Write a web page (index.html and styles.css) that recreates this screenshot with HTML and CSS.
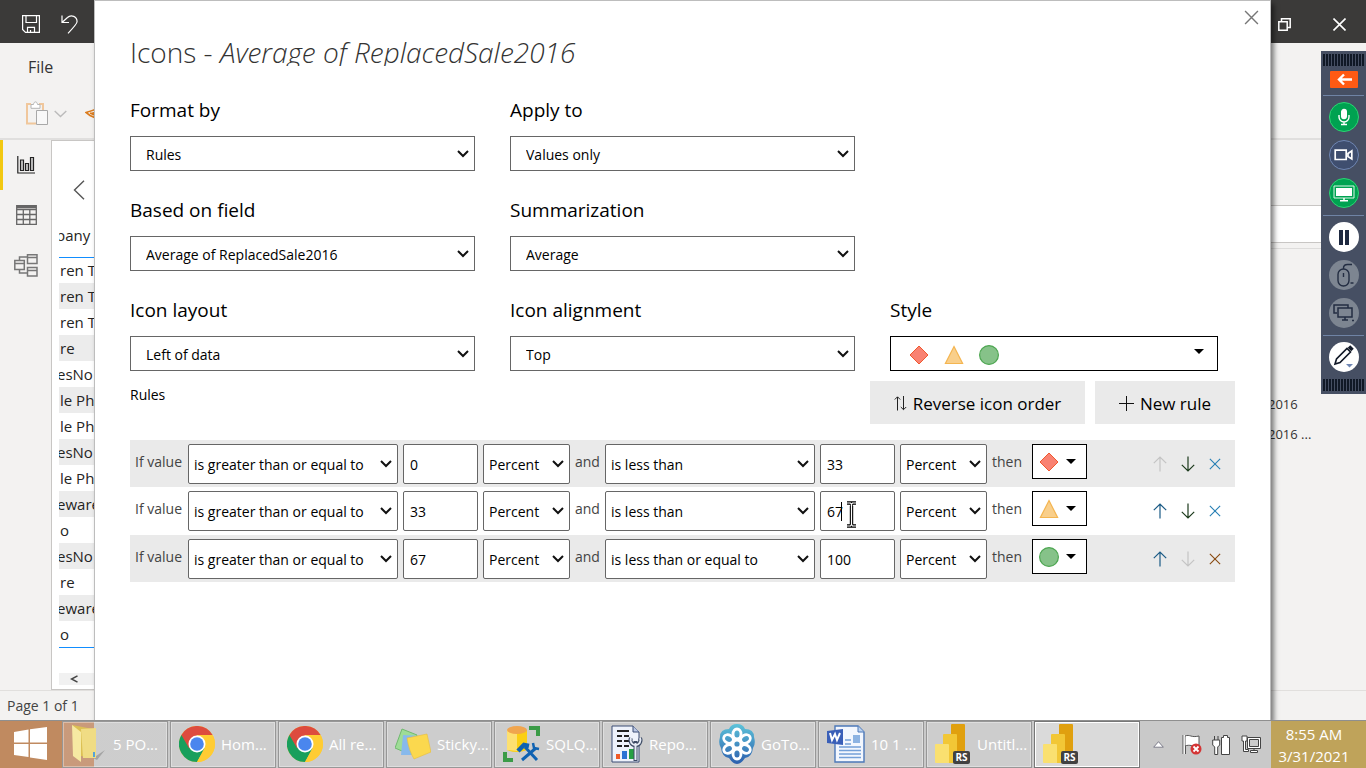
FILE: index.html
```html
<!DOCTYPE html>
<html lang="en">
<head>
<meta charset="utf-8">
<title>Icons - Average of ReplacedSale2016</title>
<link rel="stylesheet" href="styles.css">
</head>
<body>
<svg class="sprite" aria-hidden="true">
  <symbol id="diamond" viewBox="0 0 20 20"><path d="M10 1l9 9-9 9-9-9z" fill="#f98272" stroke="#f0582f"/></symbol>
  <symbol id="triangle" viewBox="0 0 20 20"><path d="M10 1.500l8.600 17H1.400z" fill="#f9cf8b" stroke="#f4b550" stroke-width="1.200"/></symbol>
  <symbol id="circle" viewBox="0 0 20 20"><circle cx="10" cy="10" r="9.400" fill="#86c289" stroke="#4da651" stroke-width="1.200"/></symbol>
  <symbol id="caret" viewBox="0 0 10 5"><path d="M0 0h10L5 5z" fill="#000"/></symbol>
  <symbol id="up" viewBox="0 0 14 16"><path d="M7 15.500V1M.8 7.200L7 1l6.200 6.200" fill="none" stroke="currentColor" stroke-width="1.200"/></symbol>
  <symbol id="down" viewBox="0 0 14 16"><path d="M7 .5V15M.8 8.800L7 15l6.200-6.200" fill="none" stroke="currentColor" stroke-width="1.200"/></symbol>
  <symbol id="cross" viewBox="0 0 14 14"><path d="M1 1l12 12M13 1L1 13" fill="none" stroke="currentColor" stroke-width="1.300"/></symbol>
  <symbol id="chrome" viewBox="0 0 36 36">
    <circle cx="18" cy="18" r="18" fill="#fc3"/>
    <path d="M18 18L2.400 9A18 18 0 0 0 18 36l7.800-13.500z" fill="#189f5c"/>
    <path d="M2.400 9A18 18 0 0 1 33.600 9H18l-7.800 13.500z" fill="#dd4b3e"/>
    <path d="M18 9.500h15.800A18 18 0 0 1 18 36l7.500-14z" fill="#fc3"/>
    <circle cx="18" cy="18" r="8.500" fill="#fff"/><circle cx="18" cy="18" r="6.800" fill="#4a86ee"/>
  </symbol>
  <symbol id="powerbi" viewBox="0 0 36 40">
    <rect x="16" width="14" height="39" rx="1" fill="#e0a00f"/>
    <path d="M8 11q0-1 1-1h12q1 0 1 1v28H8z" fill="#f2c736"/>
    <path d="M0 21q0-1 1-1h12q1 0 1 1v18H1q-1 0-1-1z" fill="#fae070"/>
    <rect x="18" y="27" width="17" height="13" rx="2" fill="#414141"/>
    <text x="26.500" y="37" text-anchor="middle" font-family="Open Sans, sans-serif" font-size="10" font-weight="700" fill="#fff">RS</text>
  </symbol>
</svg>

<div class="desktop">
  <div class="app">
    <header class="titlebar">
      <button class="plain" aria-label="Save"><svg width="18" height="18" viewBox="0 0 18 18" fill="none" stroke="#fff" stroke-width="1.200"><path d="M.6.6h16.800v16.800H3.500L.6 14.500zM4 .6v6.900h10.500V.6M5.500 17.400v-5h7v5M8.500 15v2.400"/></svg></button>
      <button class="plain" aria-label="Undo"><svg width="18" height="19" viewBox="0 0 18 19" fill="none" stroke="#fff" stroke-width="1.200"><path d="M1 .5v7h7M1 7.500l5.500-5C10-1 16.500 1.500 16 7c-.2 2-1.500 3.500-9 11.300"/></svg></button>
      <span class="spring"></span>
      <button class="plain restore" aria-label="Restore"><svg width="13" height="13" viewBox="0 0 13 13" fill="none" stroke="#fff" stroke-width="1.500"><path d="M.8 3.800h8.400v8.400H.8zM3.500 3.500V.8h8.700v8.700H9.500"/></svg></button>
      <button class="plain" aria-label="Close window"><svg width="13" height="13" viewBox="0 0 13 13" fill="none" stroke="#fff" stroke-width="1.600"><path d="M.5.5l12 12M12.500.5l-12 12"/></svg></button>
    </header>
    <div class="ribbon">
      <a class="file" href="#file">File</a>
      <div class="tools">
        <svg width="22" height="25" viewBox="0 0 22 25" fill="none"><path d="M5 3H1v19.500h9M13 3h4v6" stroke="#f0c79c" stroke-width="2"/><path d="M5 3.500h2.500C8 0 11 0 11.500 3.500H14v3.800H5z" stroke="#b5b5b5" fill="#fff"/><path d="M10.500 9.500h11v14h-11z" stroke="#a8a8a8" fill="#f8f8f8"/></svg>
        <svg width="13" height="8" viewBox="0 0 13 8" fill="none" stroke="#bbb" stroke-width="1.400"><path d="M.7 1l5.800 5.500L12.300 1"/></svg>
        <svg class="brush" width="14" height="12" viewBox="0 0 14 12" fill="none" stroke="#db7b1c" stroke-width="1.600"><path d="M14 0Q7 3 1 4.500l4 3 9 4M6 5.500l8-2M5 5l9 4"/></svg>
      </div>
    </div>
    <div class="workspace">
      <nav class="rail">
        <button class="plain railbtn active" aria-label="Report"><svg width="18" height="18" viewBox="0 0 18 18" fill="#c8c8c8" stroke="#222" stroke-width="1.200"><path d="M.8 0v17H18" fill="none"/><path d="M3.500 4h3v10.500h-3zM8.500 7.500h3v7h-3zM13.500 1.500h3v13h-3z"/></svg></button>
        <button class="plain railbtn" aria-label="Data"><svg width="21" height="20" viewBox="0 0 21 20" fill="none" stroke="#666" stroke-width="1.300"><path d="M.7.7h19.600v18.600H.7zM.7 4.500h19.600M.7 9.500h19.600M.7 14.500h19.600M7.300 4v15M13.800 4v15"/><path d="M1 2h19" stroke-width="2.500"/></svg></button>
        <button class="plain railbtn" aria-label="Model"><svg width="24" height="23" viewBox="0 0 24 23" fill="none" stroke="#777" stroke-width="1.500"><path d="M.8 6.500h9.500v9H.8zM13.500.8H23v8.700h-9.500zM13.500 13.500H23V22h-9.500zM.8 9.500h9.500M13.500 3.500H23M13.500 16.500H23M5.500 6V3h8M5.500 16v3h8"/></svg></button>
      </nav>
      <main class="canvas">
        <button class="plain back" aria-label="Back"><svg width="12" height="20" viewBox="0 0 12 20" fill="none" stroke="#555" stroke-width="1.400"><path d="M11 .8L1.500 10l9.500 9.200"/></svg></button>
        <table class="visual">
          <thead><tr><th class="cut">pany</th></tr></thead>
          <tbody>
            <tr><td>ren T</td></tr><tr><td>ren T</td></tr><tr><td>ren T</td></tr><tr><td>re</td></tr><tr><td class="cut">esNo</td></tr>
            <tr><td>le Ph</td></tr><tr><td>le Ph</td></tr><tr><td class="cut">esNo</td></tr><tr><td>le Ph</td></tr><tr><td class="cut">eware</td></tr>
            <tr><td>o</td></tr><tr><td class="cut">esNo</td></tr><tr><td>re</td></tr><tr><td class="cut">eware</td></tr><tr><td>o</td></tr>
          </tbody>
        </table>
        <div class="hscroll"><svg width="8" height="8" viewBox="0 0 8 8" fill="none" stroke="#444" stroke-width="1.500"><path d="M7.500.8L1.500 4l6 3.200"/></svg></div>
      </main>
      <aside class="fields">
        <input class="search" type="text" aria-label="Search fields">
        <ul class="fieldlist"><li>2016</li><li>2016 ...</li></ul>
      </aside>
    </div>
    <footer class="status">Page 1 of 1</footer>
  </div>

  <section class="dialog" role="dialog" aria-labelledby="dlg-title">
    <button class="plain close" aria-label="Close"><svg width="15" height="15"><use href="#cross"/></svg></button>
    <h1 id="dlg-title">Icons - <em>Average of ReplacedSale2016</em></h1>
    <div class="form">
      <div class="field"><label for="f1">Format by</label><select id="f1"><option>Rules</option></select></div>
      <div class="field"><label for="f2">Apply to</label><select id="f2"><option>Values only</option></select></div>
      <div class="field newline"><label for="f3">Based on field</label><select id="f3"><option>Average of ReplacedSale2016</option></select></div>
      <div class="field"><label for="f4">Summarization</label><select id="f4"><option>Average</option></select></div>
      <div class="field newline"><label for="f5">Icon layout</label><select id="f5"><option>Left of data</option></select></div>
      <div class="field"><label for="f6">Icon alignment</label><select id="f6"><option>Top</option></select></div>
      <div class="field"><label for="f7">Style</label>
        <button class="stylepick" id="f7"><svg width="20" height="20"><use href="#diamond"/></svg><svg width="20" height="20"><use href="#triangle"/></svg><svg width="20" height="20"><use href="#circle"/></svg><span class="spring"></span><svg class="caret" width="10" height="5"><use href="#caret"/></svg></button>
      </div>
    </div>
    <div class="rulesbar">
      <h2>Rules</h2>
      <button class="action reverse"><svg width="13" height="15" viewBox="0 0 13 15" fill="none" stroke="#222"><path d="M3.500 14.500V1M.8 3.500L3.500.8l2.700 2.700M9.500 0v13.500M6.800 11l2.700 2.700 2.700-2.700"/></svg>Reverse icon order</button>
      <button class="action new"><svg width="15" height="15" viewBox="0 0 15 15" stroke="#111"><path d="M7.500 0v15M0 7.500h15"/></svg>New rule</button>
    </div>
    <ul class="rules">
      <li class="rule">
        <span class="iftext">If value</span>
        <select class="cond" aria-label="Lower condition"><option>is greater than or equal to</option></select>
        <input class="num" type="text" value="0" aria-label="Lower value">
        <select class="unit" aria-label="Lower unit"><option>Percent</option></select>
        <span class="andtext">and</span>
        <select class="cond" aria-label="Upper condition"><option>is less than</option></select>
        <input class="num" type="text" value="33" aria-label="Upper value">
        <select class="unit" aria-label="Upper unit"><option>Percent</option></select>
        <span class="thentext">then</span>
        <button class="iconpick" aria-label="Red diamond"><svg width="20" height="20"><use href="#diamond"/></svg><svg width="10" height="5"><use href="#caret"/></svg></button>
        <div class="moves">
          <button class="plain" aria-label="Move up" disabled><svg width="14" height="16"><use href="#up"/></svg></button>
          <button class="plain dn" aria-label="Move down"><svg width="14" height="16"><use href="#down"/></svg></button>
          <button class="plain del" aria-label="Delete rule"><svg width="12" height="12"><use href="#cross"/></svg></button>
        </div>
      </li>
      <li class="rule">
        <span class="iftext">If value</span>
        <select class="cond" aria-label="Lower condition"><option>is greater than or equal to</option></select>
        <input class="num" type="text" value="33" aria-label="Lower value">
        <select class="unit" aria-label="Lower unit"><option>Percent</option></select>
        <span class="andtext">and</span>
        <select class="cond" aria-label="Upper condition"><option>is less than</option></select>
        <span class="editing">
          <input class="num" type="text" value="67" aria-label="Upper value">
          <span class="textcaret"></span>
          <svg class="pointer" width="11" height="27" viewBox="0 0 11 27"><path d="M1 2h3.500l1 1.500L6.500 2H10M1 25h3.500l1-1.500 1 1.500H10M5.500 3v21" fill="none" stroke="#000" stroke-width="3.400"/><path d="M1 2h3.500l1 1.500L6.500 2H10M1 25h3.500l1-1.500 1 1.500H10M5.500 3v21" fill="none" stroke="#fff" stroke-width="1.200"/></svg>
        </span>
        <select class="unit" aria-label="Upper unit"><option>Percent</option></select>
        <span class="thentext">then</span>
        <button class="iconpick" aria-label="Yellow triangle"><svg width="20" height="20"><use href="#triangle"/></svg><svg width="10" height="5"><use href="#caret"/></svg></button>
        <div class="moves">
          <button class="plain upb" aria-label="Move up"><svg width="14" height="16"><use href="#up"/></svg></button>
          <button class="plain dn" aria-label="Move down"><svg width="14" height="16"><use href="#down"/></svg></button>
          <button class="plain del" aria-label="Delete rule"><svg width="12" height="12"><use href="#cross"/></svg></button>
        </div>
      </li>
      <li class="rule">
        <span class="iftext">If value</span>
        <select class="cond" aria-label="Lower condition"><option>is greater than or equal to</option></select>
        <input class="num" type="text" value="67" aria-label="Lower value">
        <select class="unit" aria-label="Lower unit"><option>Percent</option></select>
        <span class="andtext">and</span>
        <select class="cond" aria-label="Upper condition"><option>is less than or equal to</option></select>
        <input class="num" type="text" value="100" aria-label="Upper value">
        <select class="unit" aria-label="Upper unit"><option>Percent</option></select>
        <span class="thentext">then</span>
        <button class="iconpick" aria-label="Green circle"><svg width="20" height="20"><use href="#circle"/></svg><svg width="10" height="5"><use href="#caret"/></svg></button>
        <div class="moves">
          <button class="plain upb" aria-label="Move up"><svg width="14" height="16"><use href="#up"/></svg></button>
          <button class="plain" aria-label="Move down" disabled><svg width="14" height="16"><use href="#down"/></svg></button>
          <button class="plain last" aria-label="Delete rule"><svg width="12" height="12"><use href="#cross"/></svg></button>
        </div>
      </li>
    </ul>
  </section>

  <div class="remote">
    <div class="grip"></div>
    <button class="plain hide" aria-label="Hide panel"><svg width="28" height="17" viewBox="0 0 28 17"><rect width="28" height="17" rx="1" fill="#ff5a13"/><path d="M22 8.500H10M14 3.500l-5 5 5 5" fill="none" stroke="#fff" stroke-width="2.400"/></svg></button>
    <div class="group">
      <button class="plain round green" aria-label="Microphone"><svg width="14" height="18" viewBox="0 0 14 18" fill="none" stroke="#fff" stroke-width="1.400"><rect x="4.700" y="1.500" width="4.600" height="9" rx="2.300" fill="#fff"/><path d="M2 7v2a5 5 0 0 0 10 0V7M7 14v2.200M4 16.500h6"/></svg></button>
      <button class="plain round navy" aria-label="Camera"><svg width="20" height="12" viewBox="0 0 20 12" fill="none" stroke="#fff" stroke-width="1.700"><path d="M1.200 1.200h11v9.300h-11zM14 4.500l3.800-2.700v8.200L14 7.500z"/></svg></button>
      <button class="plain round green" aria-label="Screen"><svg width="22" height="17" viewBox="0 0 22 17"><path d="M1 1h20v12H1z" fill="none" stroke="#d9f7e6"/><path d="M3 3h16v8H3z" fill="#fff"/><path d="M11 13v2.500M7 15.800h8" stroke="#fff" stroke-width="1.500"/></svg></button>
    </div>
    <div class="group">
      <button class="plain round white" aria-label="Pause"><svg width="10" height="15"><path d="M0 0h4v15H0zM6 0h4v15H6z" fill="#1e2940"/></svg></button>
      <button class="plain round gray" aria-label="Mouse control"><svg width="20" height="26" viewBox="0 0 20 26" fill="none" stroke="#232d42" stroke-width="1.400"><rect x="4" y="7" width="11" height="17" rx="5.500"/><path d="M9.500 7q-.5-5 5-4.500h3.500M9.500 11v4M16.500 21h3" /></svg></button>
      <button class="plain round gray" aria-label="Monitors"><svg width="21" height="18" viewBox="0 0 21 18" fill="none" stroke="#232d42" stroke-width="1.500"><path d="M4 9H1V1h14v3M5 4h14v9H5zM12 13v3M9 16h6M19 16.500h2"/></svg></button>
    </div>
    <div class="group">
      <button class="plain round white" aria-label="Draw"><svg width="22" height="24" viewBox="0 0 22 24" fill="none" stroke="#111827" stroke-width="1.600"><path d="M2 19l1.500-5L14 3.500l3.500 3.500L7 17.500z"/><path d="M16 1.500l3.500 3.500" stroke-width="3.500"/><path d="M13 19h7l-3.500 3.500z" fill="#6f86b3" stroke="none"/></svg></button>
    </div>
    <div class="grip"></div>
  </div>

  <div class="taskbar">
    <button class="plain start" aria-label="Start"><svg width="33" height="33" viewBox="0 0 33 33" fill="#fff"><path d="M0 5l14.500-2.500v13H0zM16 2.200L33 0v15.500H16zM0 17h14.500v13L0 28zM16 17h17v16l-17-2.500z"/></svg></button>
    <button class="task folder"><svg width="36" height="40" viewBox="0 0 36 40"><path d="M22 34l12-8-8 10z" fill="#888" opacity=".6"/><path d="M1 1l21 4v29l-12-2z" fill="#dcc054"/><path d="M10 5l15-1v30H12z" fill="#f0dc84"/><path d="M1 1l9 7v30L2 32z" fill="#f6e9a2"/><path d="M22 28h2v5h-2z" fill="#55a3d8"/></svg><span>5 PO...</span></button>
    <button class="task"><svg width="36" height="36"><use href="#chrome"/></svg><span>Hom...</span></button>
    <button class="task"><svg width="36" height="36"><use href="#chrome"/></svg><span>All re...</span></button>
    <button class="task"><svg width="36" height="32" viewBox="0 0 36 32"><path d="M7 1l15 6-8 19L0 20z" fill="#9edc96" stroke="#70b96f"/><path d="M8 7l17 1v19H6z" fill="#87b9ec"/><path d="M12 10l20-4 4 18-17 7q-5-8-7-21z" fill="#fbd84e" stroke="#e7bd3c" stroke-width=".6"/></svg><span>Sticky...</span></button>
    <button class="task"><svg width="37" height="38" viewBox="0 0 37 38"><path d="M26 1h11v10h-4V5h-7zM0 27h4v6h6v4H0z" fill="#3b9b47"/><path d="M4 5h20v20q-10 4-20 0z" fill="#fbcf14"/><path d="M4 5h10v21l-10-1z" fill="#fde071"/><ellipse cx="14" cy="5" rx="10" ry="4" fill="#f0a54e"/><path d="M19 35l14-12M22 22l12 13" fill="none" stroke="#0f62b2" stroke-width="3"/><path d="M15 26l6-6 5 1" fill="none" stroke="#0f62b2" stroke-width="4.500"/><path d="M30 18l1 5 5 1" fill="none" stroke="#0f62b2" stroke-width="2.500"/></svg><span>SQLQ...</span></button>
    <button class="task"><svg width="32" height="38" viewBox="0 0 32 38"><path d="M1 1h21l6 6v30H1z" fill="#eef2fb" stroke="#3b4d74"/><path d="M22 1v6h6" fill="#b9c6e3" stroke="#3b4d74"/><path d="M6 6h12M6 11h5M13 11h5M6 16h5M13 16h5M6 21h5M13 21h5" stroke="#222" stroke-width="2.200"/><path d="M5 29h4v5H5z" fill="#ef5a27"/><path d="M11 26h5v8h-5z" fill="#2b72d4"/><path d="M18 24h5v10h-5z" fill="#26a043"/><path d="M20 13a5 5 0 1 0 9 0M24.500 16v20" fill="none" stroke="#3e4c66" stroke-width="4"/><path d="M20 13a5 5 0 1 0 9 0M24.500 18v17" fill="none" stroke="#e6ebf5" stroke-width="2"/></svg><span>Repo...</span></button>
    <button class="task"><svg width="36" height="40" viewBox="0 0 36 40"><defs><linearGradient id="gt" x2="0" y2="1"><stop stop-color="#5cc3d9"/><stop offset="1" stop-color="#2c5fae"/></linearGradient></defs><g fill="url(#gt)"><path d="M18 0q6 0 8 5 9 0 9 8 2 7-1 11-1 9-8 10-4 6-8 6t-8-6q-7-1-8-10-3-4-1-11 0-8 9-8 2-5 8-5z"/></g><g fill="none" stroke="#fff" stroke-width="2.800"><circle cx="18" cy="20" r="4"/><ellipse cx="18" cy="10" rx="4" ry="5"/><ellipse cx="18" cy="30" rx="4" ry="5"/><ellipse cx="9.500" cy="15" rx="4" ry="5" transform="rotate(-60 9.500 15)"/><ellipse cx="26.500" cy="15" rx="4" ry="5" transform="rotate(60 26.500 15)"/><ellipse cx="9.500" cy="25" rx="4" ry="5" transform="rotate(60 9.500 25)"/><ellipse cx="26.500" cy="25" rx="4" ry="5" transform="rotate(-60 26.500 25)"/></g></svg><span>GoTo...</span></button>
    <button class="task"><svg width="38" height="38" viewBox="0 0 38 38"><path d="M8 1h23l6 6v30H8z" fill="#f3f7fe" stroke="#4c78b8" stroke-width="1.400"/><path d="M31 1v6h6" fill="#bcd2ef" stroke="#4c78b8"/><path d="M12 22h22M12 25.500h22M12 29h22M12 32.500h22M18 15h6M18 19h6" stroke="#74a0d8" stroke-width="1.500"/><path d="M26 10h7v8h-7z" fill="#8db3e2"/><path d="M0 6l16-2v16L0 18z" fill="#3a5fb8"/><path d="M3 8l2 7 3-6 2 6 3-7" fill="none" stroke="#fff" stroke-width="2"/></svg><span>10 1 ...</span></button>
    <button class="task"><svg width="36" height="40"><use href="#powerbi"/></svg><span>Untitl...</span></button>
    <button class="task current" aria-label="Power BI"><svg width="36" height="40"><use href="#powerbi"/></svg></button>
    <div class="tray">
      <svg width="11" height="7" viewBox="0 0 11 7"><path d="M5.500.7l4.800 5.500H.7z" fill="#fff" stroke="#667" stroke-width=".8"/></svg>
      <svg class="flag" width="20" height="21" viewBox="0 0 20 21"><path d="M1 20V1M3.500 20V3" stroke="#555"/><path d="M3 2c5-2 6 2 14 0v9c-7 2-9-1-14 1z" fill="#fff" stroke="#555"/><path d="M2.200 1v19" stroke="#fff" stroke-width="1.200"/><circle cx="14" cy="15" r="5.500" fill="#d43535"/><path d="M11.500 12.500l5 5M16.500 12.500l-5 5" stroke="#fff" stroke-width="1.800"/></svg>
      <svg width="19" height="20" viewBox="0 0 19 20" fill="#fff" stroke="#444"><path d="M9.500 2.500h2v-2h4v2h2v17h-8zM2.500 1v4M6 1v4M.7 5h7v5l-2 2v7.500h-3V12l-2-2z"/></svg>
      <svg width="20" height="19" viewBox="0 0 20 19" fill="none" stroke="#444"><path d="M6.500 2.500h13v11h-13zM9.500 17.500h7v-2h-7zM13 13.500v2" fill="#fff"/><path d="M8.500 4.500h9v7h-9z" fill="#ccc"/><path d="M1 1h5v5H4.500v8.500h3v2h-5V6H1z" fill="#fff"/></svg>
    </div>
    <div class="clock"><span>8:55 AM</span><span>3/31/2021</span></div>
  </div>
</div>
</body>
</html>
```
FILE: styles.css
```css
* { box-sizing: border-box; }
body { margin: 0; font-family: "Open Sans", "Noto Sans", sans-serif; font-size: 14px; color: #000; }
.sprite { position: absolute; width: 0; height: 0; }
svg { display: block; flex: none; }
ul { list-style: none; margin: 0; padding: 0; }
button, input, select { font: inherit; color: inherit; }
.plain { border: 0; background: none; padding: 0; display: flex; align-items: center; justify-content: center; }
.spring { flex: 1; }

.desktop { position: relative; height: 100vh; display: flex; flex-direction: column; overflow: hidden; }
.app { flex: 1; min-height: 0; display: flex; flex-direction: column; background: #f3f2f1; }

.titlebar { height: 43px; background: #3b3a39; display: flex; align-items: center; gap: 21px; padding: 5px 20px 0 22px; }
.titlebar .spring { margin-right: -21px; }
.titlebar .restore { margin-right: 21px; }
.ribbon { height: 97px; padding: 12px 26px 0; border-bottom: 2px solid #e0dfde; }
.file { display: block; padding-left: 2px; font-size: 16px; line-height: 24px; color: #333; text-decoration: none; }
.tools { display: flex; align-items: center; gap: 6px; padding-top: 22px; }
.brush { margin-left: 12px; }

.workspace { flex: 1; min-height: 0; display: flex; }
.rail { width: 51px; display: flex; flex-direction: column; }
.railbtn { height: 50px; padding-right: 2px; border-left: 3px solid transparent; }
.railbtn.active { border-left-color: #f2c811; }
.canvas { flex: 1; min-width: 0; background: #fff; border: 1px solid #c8c6c4; padding: 39px 0 0 7px; overflow: hidden; }
.back { margin-left: 14px; }
.visual { width: 100%; margin-top: 26px; border-collapse: collapse; table-layout: fixed; font-size: 15px; color: #252423; }
.visual th { height: 31px; padding: 0; line-height: 18px; vertical-align: top; font-weight: 400; text-align: left; border-bottom: 1px solid #118dff; }
.visual td { height: 26px; padding: 0 0 0 1px; line-height: 24px; overflow: hidden; white-space: nowrap; }
.visual .cut { text-indent: -3px; overflow: hidden; }
.visual tr:nth-child(even) td { background: #ececec; }
.visual tbody { border-bottom: 1px solid #118dff; }
.hscroll { margin-top: 25px; padding: 2px 11px; background: #f1f1f1; }
.fields { width: 98px; padding: 65px 0 0; }
.search { width: 100%; height: 38px; border: 1px solid #c8c6c4; background: #fff; }
.fieldlist { margin-top: 5px; padding-top: 140px; border-top: 1px solid #dddcdb; font-size: 13px; line-height: 30px; color: #333; }
.status { height: 30px; padding-left: 7px; line-height: 30px; font-size: 14px; color: #444; border-top: 1px solid #e1dfdd; }

.dialog { position: absolute; top: 0; bottom: 48px; left: 94px; right: 95px; background: #fff; border: 1px solid #bdbdbd; border-bottom: 0; box-shadow: 3px 4px 5px rgba(0, 0, 0, .5); padding: 33px 35px 0; }
.close { position: absolute; top: 9px; right: 11px; color: #777; }
h1 { margin: 0; height: 32px; line-height: 36px; overflow: hidden; font-size: 28px; font-weight: 300; color: #333; white-space: nowrap; }
.form { margin-top: 30px; display: grid; grid-template-columns: repeat(3, minmax(0, 1fr)); gap: 25px 35px; }
.field { display: flex; flex-direction: column; gap: 12px; }
.newline { grid-column-start: 1; }
.field label { font-size: 19px; line-height: 28px; }
select { appearance: none; background: #fff url("data:image/svg+xml,%3Csvg xmlns='http://www.w3.org/2000/svg' width='12' height='8' fill='none' stroke='%23111' stroke-width='2'%3E%3Cpath d='M1 1l5 5 5-5'/%3E%3C/svg%3E") no-repeat right 5px center; }
.field select { height: 35px; padding: 2px 20px 0 15px; border: 1px solid #666; border-radius: 0; }
.stylepick { height: 35px; margin-right: 17px; padding: 2px 13px 0 18px; border: 1px solid #000; background: #fff; display: flex; align-items: center; gap: 15px; }
.caret { margin-bottom: 7px; }

.rulesbar { margin-top: 10px; display: flex; gap: 10px; }
h2 { flex: 1; margin: 0; font-size: 14px; line-height: 28px; font-weight: 400; }
.action { height: 43px; padding: 2px 0 0; border: 0; background: #eaeaea; font-size: 17px; display: flex; align-items: center; justify-content: center; gap: 6px; }
.reverse { width: 215px; }
.new { width: 140px; }

.rules { margin-top: 16px; }
.rule { min-height: 47px; display: flex; align-items: flex-start; gap: 5px; padding: 4px 14px 3px 5px; }
.rule:nth-child(odd) { background: #eaeaea; }
.rule:nth-child(even) { min-height: 48px; }
.rule > span { line-height: 36px; color: #444; white-space: nowrap; }
.iftext { width: 48px; }
.andtext { width: 25px; }
.thentext { width: 35px; }
.rule select, .num { height: 40px; border: 1px solid #666; border-radius: 2px; color: #000; }
.rule select { padding: 0 20px 0 5px; }
.cond { width: 210px; }
.unit { width: 87px; }
.num { display: block; width: 75px; padding: 0 6px; background: #fff; }
.editing { position: relative; }
.textcaret { position: absolute; left: 21px; top: 11px; width: 1px; height: 19px; background: #000; }
.pointer { position: absolute; left: 26px; top: 10px; }
.iconpick { width: 55px; height: 35px; padding: 0 10px 0 6px; border: 1px solid #000; background: #fff; display: flex; align-items: center; justify-content: space-between; }
.moves { margin-left: auto; height: 39px; display: flex; align-items: center; gap: 14px; color: #222; }
.moves .plain:disabled { color: #c4c4c4; }
.upb { color: #1b5b86; }
.dn { color: #1c3a1c; }
.del { color: #2980b5; }
.last { color: #8a4b12; }

.remote { position: absolute; right: 0; top: 51px; width: 45px; padding: 3px 2px; background: #464f63; display: flex; flex-direction: column; align-items: center; }
.grip { align-self: stretch; height: 12px; background: repeating-linear-gradient(90deg, #101826 0 2px, #464f63 2px 3px); }
.hide { margin: 5px 0 7px; }
.group { align-self: stretch; border-top: 1px solid #6f83a5; padding: 6px 0 7px; display: flex; flex-direction: column; align-items: center; gap: 8px; }
.round { width: 30px; height: 30px; border-radius: 50%; border: 1px solid transparent; }
.green { background: #00a251; border-color: #2bd673; }
.navy { background: #3f4e6f; border-color: #6f86b3; }
.white { background: #fff; }
.gray { background: #7d8591; }

.taskbar { position: relative; height: 48px; display: flex; gap: 2px; border-top: 1px solid #8f8f8f; background: linear-gradient(90deg, #c08a60 0 94px, #c9c9c9 94px calc(100% - 95px), #bfa35a calc(100% - 95px)); }
.start { width: 60px; padding-bottom: 2px; }
.task { width: 106px; padding: 0 0 2px 8px; border: 1px solid #979797; box-shadow: inset 0 0 0 1px rgba(255, 255, 255, .35); background: rgba(210, 210, 210, .5); display: flex; align-items: center; gap: 6px; font-size: 15px; color: #fff; white-space: nowrap; }
.folder { background: linear-gradient(90deg, rgba(210, 170, 150, .5) 31px, rgba(210, 210, 210, .5) 31px); }
.current { background: #dadada; border-color: #777; box-shadow: inset 0 0 0 1px #fff; }
.tray { flex: 1; display: flex; align-items: center; justify-content: flex-end; gap: 10px; padding-right: 8px; }
.flag { margin-left: 8px; }
.clock { width: 95px; padding-right: 9px; display: flex; flex-direction: column; align-items: center; justify-content: center; font-size: 15px; line-height: 22px; color: #fff; }
```
